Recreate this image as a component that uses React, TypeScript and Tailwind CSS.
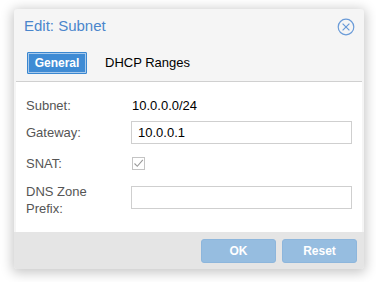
import React from 'react';

const font = { fontFamily: '"Liberation Sans", Arial, sans-serif' };

const CloseIcon: React.FC = () => (
  <svg width="18" height="18" viewBox="0 0 18 18" fill="none">
    <circle cx="9" cy="9" r="7.8" stroke="#6a9bd8" strokeWidth="1.2" />
    <path d="M5.6 5.6 L12.4 12.4 M12.4 5.6 L5.6 12.4" stroke="#6a9bd8" strokeWidth="1.2" />
  </svg>
);

const Check: React.FC = () => (
  <div className="w-[13px] h-[13px] border border-[#c4c4c4] bg-white flex items-center justify-center">
    <svg width="11" height="11" viewBox="0 0 11 11" fill="none">
      <path d="M1.5 5.5 L4.3 8.3 L9.8 1.8" stroke="#9a9a9a" strokeWidth="1.1" />
    </svg>
  </div>
);

const App: React.FC = () => {
  return (
    <div className="w-full h-[282px] bg-white pt-[9px] pl-[14px] overflow-hidden" style={font}>
      <div className="w-[350px] h-[260px] rounded-[3px] bg-[#f5f5f5] shadow-[0_2px_12px_2px_rgba(0,0,0,0.22)] flex flex-col overflow-hidden">
        {/* header */}
        <div className="h-[35px] flex items-center justify-between pl-[10px] pr-[9px]">
          <span className="text-[15px] text-[#4a86cc]">Edit: Subnet</span>
          <CloseIcon />
        </div>

        {/* tabs */}
        <div className="h-[37px] flex items-start pl-[13px] pt-[8px]">
          <div className="w-[60px] h-[22px] flex items-center justify-center bg-[#3f8bd4] border border-[#3a87d0] rounded-[1px] shadow-[inset_0_0_0_1px_rgba(255,255,255,0.55)] text-white text-[12px] font-bold">
            General
          </div>
          <div className="h-[22px] flex items-center ml-[18px] text-[13px] text-black">DHCP Ranges</div>
        </div>

        {/* body */}
        <div className="mx-[2px] h-[151px] bg-white border-t border-[#d0d0d0] pl-[10px] pr-[10px] text-[13px]">
          <div className="flex items-center h-[23px] mt-[12px]">
            <span className="w-[105px] text-[#555]">Subnet:</span>
            <span className="text-black pl-[1px]">10.0.0.0/24</span>
          </div>
          <div className="flex items-center h-[23px] mt-[4px]">
            <span className="w-[105px] text-[#555]">Gateway:</span>
            <div className="w-[221px] h-[23px] border border-[#cfcfcf] flex items-center px-[6px] text-black">10.0.0.1</div>
          </div>
          <div className="flex items-center h-[23px] mt-[8px]">
            <span className="w-[106px] text-[#555]">SNAT:</span>
            <Check />
          </div>
          <div className="flex items-start mt-[8px]">
            <span className="w-[105px] text-[#555] leading-[17px]">DNS Zone<br />Prefix:</span>
            <div className="w-[221px] h-[23px] mt-[3px] border border-[#cfcfcf]" />
          </div>
        </div>

        {/* footer */}
        <div className="flex-1 bg-[#e5e5e5] flex items-start justify-end pt-[7px] pr-[7px] gap-[6px]">
          <div className="w-[75px] h-[24px] rounded-[3px] bg-[#96bde0] border border-[#8db6dc] flex items-center justify-center text-white text-[12px] font-bold">OK</div>
          <div className="w-[75px] h-[24px] rounded-[3px] bg-[#96bde0] border border-[#8db6dc] flex items-center justify-center text-white text-[12px] font-bold">Reset</div>
        </div>
      </div>
    </div>
  );
};

export default App;
